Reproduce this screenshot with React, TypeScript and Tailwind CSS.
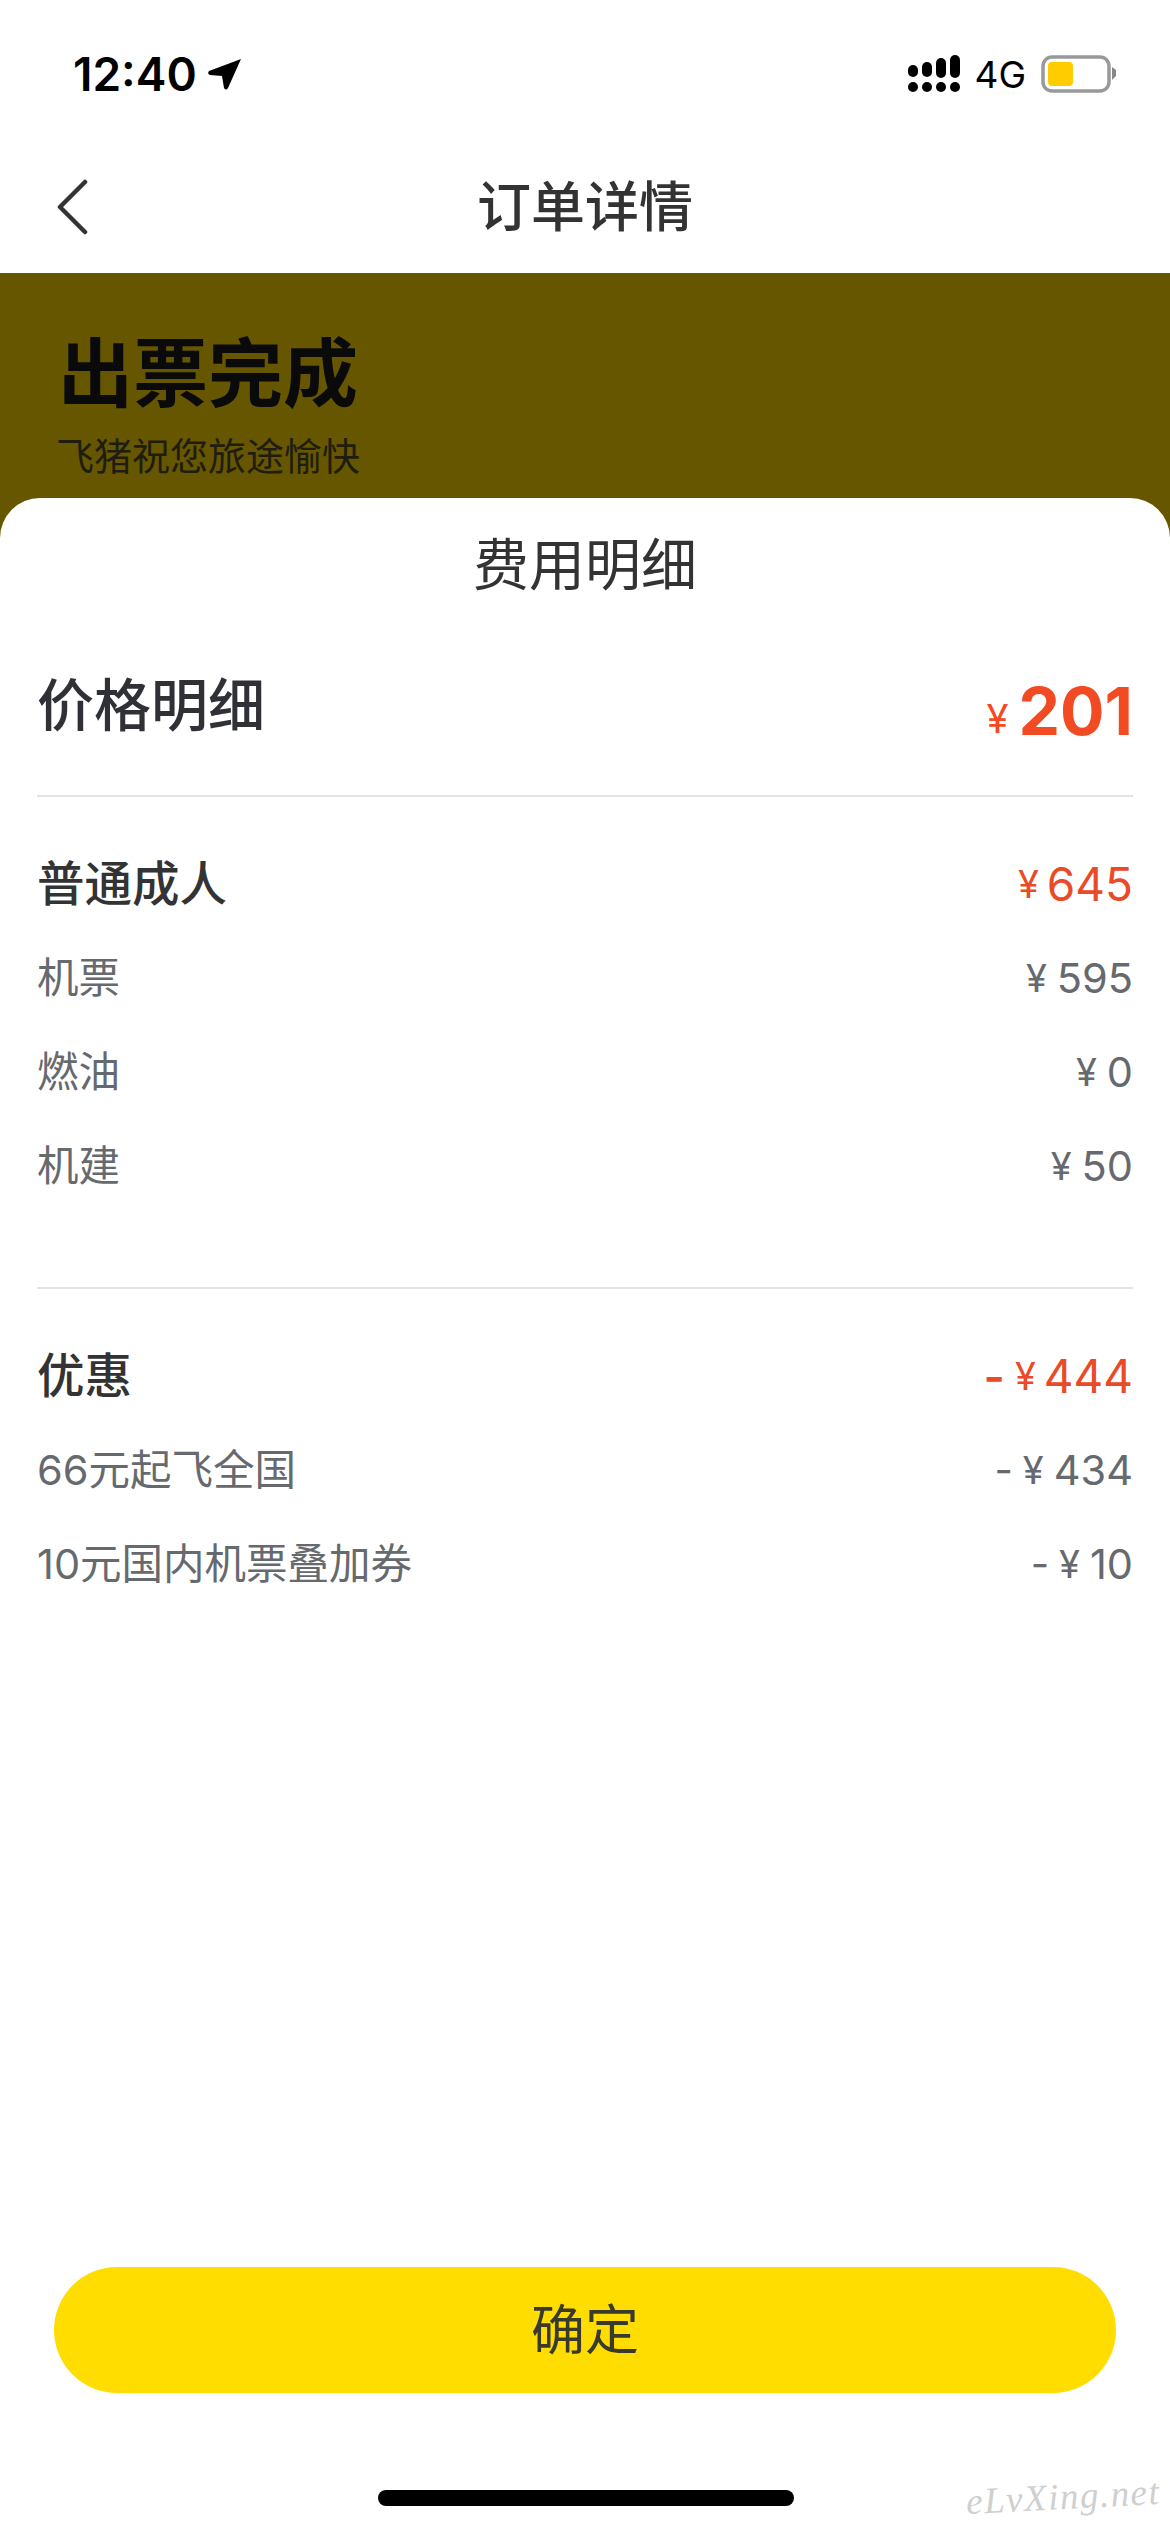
const font = { fontFamily: '"Inter","Noto Sans CJK SC",sans-serif' };

function Row({ label, amount, minus }: { label: string; amount: string; minus?: boolean }) {
  return (
    <div className="flex h-[94px] items-center justify-between text-[41.5px] text-[#666a6e]">
      <span>{label}</span>
      <span className="flex items-center">
        {minus && <span className="mr-[10px] text-[40px]">-</span>}
        <span className="mr-[10px] text-[38px]">¥</span>
        <span>{amount}</span>
      </span>
    </div>
  );
}

function Head({ label, amount, minus }: { label: string; amount: string; minus?: boolean }) {
  return (
    <div className="flex h-[94px] items-center justify-between">
      <span className="text-[47.5px] font-medium text-[#333]">{label}</span>
      <span className="flex items-center text-[46px] text-[#e94b28]">
        {minus && <span className="mr-[10px] font-semibold">-</span>}
        <span className="mr-[8px] text-[38px]">¥</span>
        <span>{amount}</span>
      </span>
    </div>
  );
}

export default function App() {
  return (
    <div style={font} className="relative flex h-[2532px] w-[1170px] flex-col overflow-hidden bg-white">
      <div className="flex h-[148px] items-center justify-between pl-[73px] pr-[53px]">
        <div className="flex items-center gap-[11px]">
          <span className="text-[46px] font-semibold leading-none text-black">12:40</span>
          <svg width="34" height="32" viewBox="0 0 34 32">
            <path d="M33 1 L1 13 Q-1 16 2 17 L14 18 L16 30 Q18 33 20 30 Z" fill="#000" />
          </svg>
        </div>
        <div className="flex items-center">
          <svg width="54" height="38" viewBox="0 0 54 38">
            <g fill="#000">
              <rect x="0" y="10" width="10" height="12" rx="5" />
              <rect x="14" y="7" width="10" height="15" rx="5" />
              <rect x="28" y="3" width="10" height="20" rx="5" />
              <rect x="42" y="0" width="10" height="23" rx="5" />
              <circle cx="5" cy="32" r="5" />
              <circle cx="19" cy="32" r="5" />
              <circle cx="33" cy="32" r="5" />
              <circle cx="47" cy="32" r="5" />
            </g>
          </svg>
          <span className="ml-[12px] text-[37px] leading-none text-black">4G</span>
          <svg className="ml-[15px]" width="76" height="38" viewBox="0 0 76 38">
            <rect x="2" y="2" width="66" height="34" rx="9" fill="#fff" stroke="#999" strokeWidth="3.5" />
            <rect x="7" y="7" width="25" height="24" rx="4" fill="#ffcc00" />
            <path d="M71 12 L75 15 L75 21 L71 25 Z" fill="#888" />
          </svg>
        </div>
      </div>

      <div className="relative flex h-[125px] items-center justify-center">
        <svg className="absolute left-[56px] top-[31px]" width="32" height="56" viewBox="0 0 32 56">
          <path d="M29 3 L4 28 L29 53" fill="none" stroke="#333" strokeWidth="4.5" strokeLinecap="round" strokeLinejoin="round" />
        </svg>
        <span className="-mt-[6px] text-[54px] font-medium leading-none text-[#333]">订单详情</span>
      </div>

      <div className="flex h-[265px] flex-col bg-[#665600] pl-[58px] pt-[51px]">
        <span className="text-[75px] font-bold leading-[100px] text-[#0a0a0a]">出票完成</span>
        <span className="-ml-[2px] mt-[5px] text-[38px] leading-[54px] text-[#1f1d10]">飞猪祝您旅途愉快</span>
      </div>

      <div className="relative -mt-[40px] flex flex-1 flex-col rounded-t-[40px] bg-white px-[37px]">
        <div className="flex h-[134px] items-center justify-center text-[56px] leading-none text-[#333]">费用明细</div>
        <div className="flex h-[165px] items-start justify-between border-b-2 border-[#e3e3e6]">
          <span className="mt-[34px] text-[57px] font-medium leading-[80px] text-[#2f3136]">价格明细</span>
          <span className="mt-[26px] flex items-center text-[#f24a23]">
            <span className="mr-[10px] mt-[16px] text-[40px] leading-[90px]">¥</span>
            <span className="text-[66px] font-bold leading-[90px]">201</span>
          </span>
        </div>

        <div className="flex h-[492px] flex-col border-b-2 border-[#e3e3e6] pt-[40px]">
          <Head label="普通成人" amount="645" />
          <Row label="机票" amount="595" />
          <Row label="燃油" amount="0" />
          <Row label="机建" amount="50" />
        </div>

        <div className="flex flex-1 flex-col pt-[40px]">
          <Head label="优惠" amount="444" minus />
          <Row label="66元起飞全国" amount="434" minus />
          <Row label="10元国内机票叠加券" amount="10" minus />
          <div className="flex-1" />
          <div className="mx-[17px] flex h-[126px] items-center justify-center rounded-full bg-[#ffdd00] text-[54px] text-[#3a3a2a]">确定</div>
          <div className="h-[139px]" />
        </div>
      </div>

      <div className="absolute bottom-[26px] left-[378px] h-[16px] w-[416px] rounded-full bg-black" />
      <span className="absolute bottom-[8px] right-[10px] -rotate-3 text-[37px] italic tracking-[1.5px] text-[#cfcfcf]" style={{ fontFamily: '"Liberation Serif",serif' }}>
        eLvXing.net
      </span>
    </div>
  );
}
